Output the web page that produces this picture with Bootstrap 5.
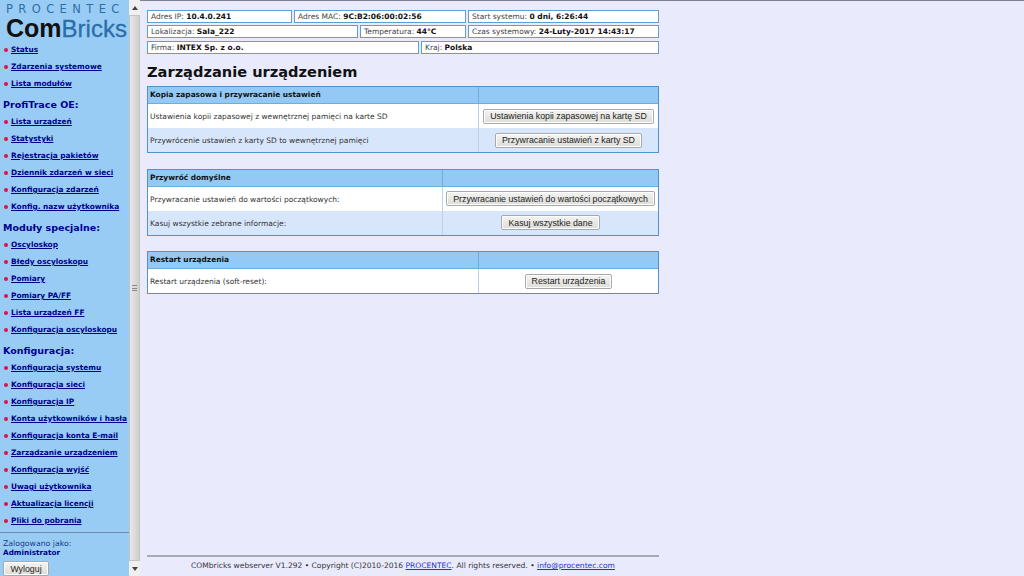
<!DOCTYPE html>
<html lang="pl">
<head>
    <meta charset="UTF-8">
    <meta name="viewport" content="width=device-width, initial-scale=1.0">
    <title>COMbricks</title>
    <link href="https://cdn.jsdelivr.net/npm/bootstrap@5.3.0/dist/css/bootstrap.min.css" rel="stylesheet">
    <style>
        body { height: 576px; overflow: hidden; background: #eaeafd; font-family: "DejaVu Sans", Verdana, sans-serif; font-size: 7.5px; line-height: 12px; color: #333; }
        a { color: #00008b; }
        .side-panel { width: 129px; height: 576px; background: #99ccf5; flex: none; }
        .logo-top { font-family: "DejaVu Sans", Verdana, sans-serif; font-size: 11.5px; line-height: 12px; letter-spacing: 5.4px; color: #2f6ea5; padding: 3px 0 0 6px; white-space: nowrap; height: 15px; }
        .logo-main { font-family: "Liberation Sans", Arial, sans-serif; font-size: 24px; line-height: 26px; height: 26px; color: #2a6ea8; padding-left: 6px; white-space: nowrap; -webkit-text-stroke: .3px #2a6ea8; }
        .logo-main b { color: #111; font-weight: 700; font-size: 25px; -webkit-text-stroke: 0; }
        .side-menu { list-style: none; margin: 0; padding: 0; }
        .side-menu li { height: 17px; line-height: 17px; padding-left: 11px; position: relative; white-space: nowrap; font-weight: 700; font-size: 7.4px; }
        .side-menu li::before { content: ""; position: absolute; left: 4px; top: 7px; width: 4px; height: 4px; border-radius: 50%; background: #e0104a; }
        .side-head { font-size: 9.5px; line-height: 14px; font-weight: 700; color: #00008b; margin: 6px 0 1px; padding: 0 0 0 3px; }
        .side-user { border-top: 1px solid #6f8aa5; padding: 6px 3px 0; color: #1b3a8a; line-height: 9px; height: 44px; font-size: 7.75px; }
        .side-user b { color: #00008b; font-size: 7.3px; }
        .old-btn { font-family: "Liberation Sans", Arial, sans-serif; font-size: 8.8px; line-height: 12px; color: #222; background: linear-gradient(#f4f4f2, #dcdcd8); border: 1px solid #a9a9a9; border-radius: 2px; padding: 0 6px; height: 15px; box-shadow: inset 0 0 0 1px #fff; white-space: nowrap; }
        .side-user .old-btn { width: 46px; padding: 0; margin-top: 4px; display: block; }
        .scroll-rail { width: 11px; height: 576px; background: #f0f0f0; flex: none; }
        .scroll-end { height: 15px; display: flex; align-items: center; justify-content: center; }
        .arrow-up { border: 3px solid transparent; border-top: 0; border-bottom: 4px solid #444; }
        .arrow-down { border: 3px solid transparent; border-bottom: 0; border-top: 4px solid #444; }
        .scroll-thumb { background: linear-gradient(90deg, #e8e8e8, #cfcfcf); border: 1px solid #c4c4c4; }
        .scroll-grip { width: 5px; height: 6px; border-top: 1px solid #888; border-bottom: 1px solid #888; background: linear-gradient(#888, #888) center / 100% 1px no-repeat; }
        .right-wrap { flex-grow: 1; height: 576px; border-top: 1px solid #80808f; padding-left: 7px; }
        .main-area { width: 512px; height: 575px; padding-top: 9px; }
        .info-row { display: flex; gap: 2px; margin-bottom: 2px; }
        .info-row.row-gap { margin-bottom: 3px; }
        .info-cell { height: 13px; line-height: 11px; padding-left: 3px; background: #fff; border: 1px solid #5f9fd0; white-space: nowrap; overflow: hidden; color: #444; }
        .info-cell b { color: #111; font-size: 7.5px; }
        .page-title { font-size: 14.6px; line-height: 20px; font-weight: 700; color: #111; margin: 6px 0 4px; }
        .set-box { border: 1px solid #4f95cc; margin-bottom: 15.5px; background: #fff; }
        .set-head { height: 17px; background: #93c9f4; border-bottom: 1px solid #6eaedd; font-weight: 700; color: #111; font-size: 7.4px; }
        .set-line { height: 24px; color: #333; }
        .set-line.alt { background: #d8e6fb; }
        .col-text { padding-left: 2px; white-space: nowrap; line-height: 25px; flex: none; border-right: 1px solid #b9d3ec; height: 100%; }
        .set-head .col-text { line-height: 16px; border-right-color: #6eaedd; }
        .col-wide { width: 331px; }
        .col-mid { width: 295px; }
        .col-act { flex: 1; height: 100%; display: flex; align-items: center; justify-content: center; }
        .page-foot { border-top: 2px solid #a9a9b5; padding: 3px 0 4px; text-align: center; line-height: 12px; color: #333; white-space: nowrap; font-size: 7.55px; }
        .page-foot a { color: #2233cc; }
    </style>
</head>
<body>
    <div class="d-flex">
        <div class="side-panel d-flex flex-column">
            <div class="logo-top">PROCENTEC</div>
            <div class="logo-main"><b>Com</b>Bricks</div>
            <ul class="side-menu">
                <li><a href="#">Status</a></li>
                <li><a href="#">Zdarzenia systemowe</a></li>
                <li><a href="#">Lista modułów</a></li>
            </ul>
            <h6 class="side-head">ProfiTrace OE:</h6>
            <ul class="side-menu">
                <li><a href="#">Lista urządzeń</a></li>
                <li><a href="#">Statystyki</a></li>
                <li><a href="#">Rejestracja pakietów</a></li>
                <li><a href="#">Dziennik zdarzeń w sieci</a></li>
                <li><a href="#">Konfiguracja zdarzeń</a></li>
                <li><a href="#">Konfig. nazw użytkownika</a></li>
            </ul>
            <h6 class="side-head">Moduły specjalne:</h6>
            <ul class="side-menu">
                <li><a href="#">Oscyloskop</a></li>
                <li><a href="#">Błędy oscyloskopu</a></li>
                <li><a href="#">Pomiary</a></li>
                <li><a href="#">Pomiary PA/FF</a></li>
                <li><a href="#">Lista urządzeń FF</a></li>
                <li><a href="#">Konfiguracja oscyloskopu</a></li>
            </ul>
            <h6 class="side-head">Konfiguracja:</h6>
            <ul class="side-menu">
                <li><a href="#">Konfiguracja systemu</a></li>
                <li><a href="#">Konfiguracja sieci</a></li>
                <li><a href="#">Konfiguracja IP</a></li>
                <li><a href="#">Konta użytkowników i hasła</a></li>
                <li><a href="#">Konfiguracja konta E-mail</a></li>
                <li><a href="#">Zarządzanie urządzeniem</a></li>
                <li><a href="#">Konfiguracja wyjść</a></li>
                <li><a href="#">Uwagi użytkownika</a></li>
                <li><a href="#">Aktualizacja licencji</a></li>
                <li><a href="#">Pliki do pobrania</a></li>
            </ul>
            <div class="side-user mt-auto">
                Zalogowano jako:<br><b>Administrator</b>
                <button class="old-btn" type="button">Wyloguj</button>
            </div>
        </div>
        <div class="scroll-rail d-flex flex-column">
            <div class="scroll-end"><div class="arrow-up"></div></div>
            <div class="scroll-thumb flex-grow-1 d-flex align-items-center justify-content-center"><div class="scroll-grip"></div></div>
            <div class="scroll-end"><div class="arrow-down"></div></div>
        </div>
        <div class="right-wrap">
        <div class="main-area d-flex flex-column">
            <div class="info-row">
                <div class="info-cell" style="width:145px">Adres IP: <b>10.4.0.241</b></div>
                <div class="info-cell" style="width:172px">Adres MAC: <b>9C:B2:06:00:02:56</b></div>
                <div class="info-cell" style="width:191px">Start systemu: <b>0 dni, 6:26:44</b></div>
            </div>
            <div class="info-row row-gap">
                <div class="info-cell" style="width:211px">Lokalizacja: <b>Sala_222</b></div>
                <div class="info-cell" style="width:106px">Temperatura: <b>44°C</b></div>
                <div class="info-cell" style="width:191px">Czas systemowy: <b>24-Luty-2017 14:43:17</b></div>
            </div>
            <div class="info-row">
                <div class="info-cell" style="width:272px">Firma: <b>INTEX Sp. z o.o.</b></div>
                <div class="info-cell" style="width:238px">Kraj: <b>Polska</b></div>
            </div>
            <h1 class="page-title">Zarządzanie urządzeniem</h1>

            <div class="set-box">
                <div class="set-head d-flex"><div class="col-text col-wide">Kopia zapasowa i przywracanie ustawień</div></div>
                <div class="set-line d-flex"><div class="col-text col-wide">Ustawienia kopii zapasowej z wewnętrznej pamięci na karte SD</div><div class="col-act"><button class="old-btn" type="button">Ustawienia kopii zapasowej na kartę SD</button></div></div>
                <div class="set-line alt d-flex"><div class="col-text col-wide">Przywrócenie ustawień z karty SD to wewnętrznej pamięci</div><div class="col-act"><button class="old-btn" type="button">Przywracanie ustawień z karty SD</button></div></div>
            </div>

            <div class="set-box">
                <div class="set-head d-flex"><div class="col-text col-mid">Przywróć domyślne</div></div>
                <div class="set-line d-flex"><div class="col-text col-mid">Przywracanie ustawień do wartości początkowych:</div><div class="col-act"><button class="old-btn" type="button">Przywracanie ustawień do wartości początkowych</button></div></div>
                <div class="set-line alt d-flex"><div class="col-text col-mid">Kasuj wszystkie zebrane informacje:</div><div class="col-act"><button class="old-btn" type="button">Kasuj wszystkie dane</button></div></div>
            </div>

            <div class="set-box">
                <div class="set-head d-flex"><div class="col-text col-wide">Restart urządzenia</div></div>
                <div class="set-line d-flex"><div class="col-text col-wide">Restart urządzenia (soft-reset):</div><div class="col-act"><button class="old-btn" type="button">Restart urządzenia</button></div></div>
            </div>

            <div class="page-foot mt-auto">COMbricks webserver V1.292 • Copyright (C)2010-2016 <a href="#">PROCENTEC</a>. All rights reserved. • <a href="#">info@procentec.com</a></div>
        </div>
        </div>
    </div>
</body>
</html>
